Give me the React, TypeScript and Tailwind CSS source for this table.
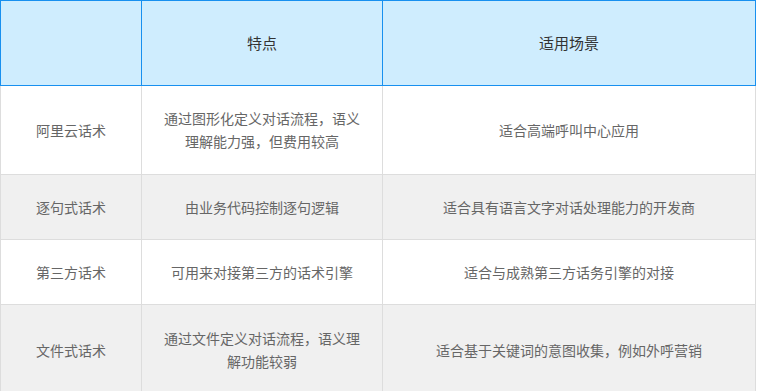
import React from "react";

interface Row {
  name: string;
  feature: string;
  scene: string;
  height: string;
  gray: boolean;
}

const rows: Row[] = [
  {
    name: "阿里云话术",
    feature: "通过图形化定义对话流程，语义理解能力强，但费用较高",
    scene: "适合高端呼叫中心应用",
    height: "h-[89px]",
    gray: false,
  },
  {
    name: "逐句式话术",
    feature: "由业务代码控制逐句逻辑",
    scene: "适合具有语言文字对话处理能力的开发商",
    height: "h-[65px]",
    gray: true,
  },
  {
    name: "第三方话术",
    feature: "可用来对接第三方的话术引擎",
    scene: "适合与成熟第三方话务引擎的对接",
    height: "h-[65px]",
    gray: false,
  },
  {
    name: "文件式话术",
    feature: "通过文件定义对话流程，语义理解功能较弱",
    scene: "适合基于关键词的意图收集，例如外呼营销",
    height: "h-[91px]",
    gray: true,
  },
];

const App: React.FC = () => {
  return (
    <div className="h-[391px] w-[757px] overflow-hidden bg-white font-['Noto_Sans_CJK_SC','Microsoft_YaHei',sans-serif]">
      <table className="w-[756px] table-fixed border-collapse text-center">
        <colgroup>
          <col className="w-[141px]" />
          <col className="w-[241px]" />
          <col />
        </colgroup>
        <thead>
          <tr className="h-[85px] bg-[#cfedfe] text-[15px] text-[#333]">
            <th className="border border-[#1890ef] font-normal"></th>
            <th className="border border-[#1890ef] font-normal">特点</th>
            <th className="border border-[#1890ef] font-normal">适用场景</th>
          </tr>
        </thead>
        <tbody>
          {rows.map((row) => (
            <tr
              key={row.name}
              className={`${row.height} text-[14px] leading-[23px] text-[#666] ${
                row.gray ? "bg-[#f0f0f0]" : "bg-white"
              }`}
            >
              <td className="border border-[#dddddd] px-3">{row.name}</td>
              <td className="border border-[#dddddd] px-5">{row.feature}</td>
              <td className="border border-[#dddddd] px-5">{row.scene}</td>
            </tr>
          ))}
        </tbody>
      </table>
    </div>
  );
};

export default App;
